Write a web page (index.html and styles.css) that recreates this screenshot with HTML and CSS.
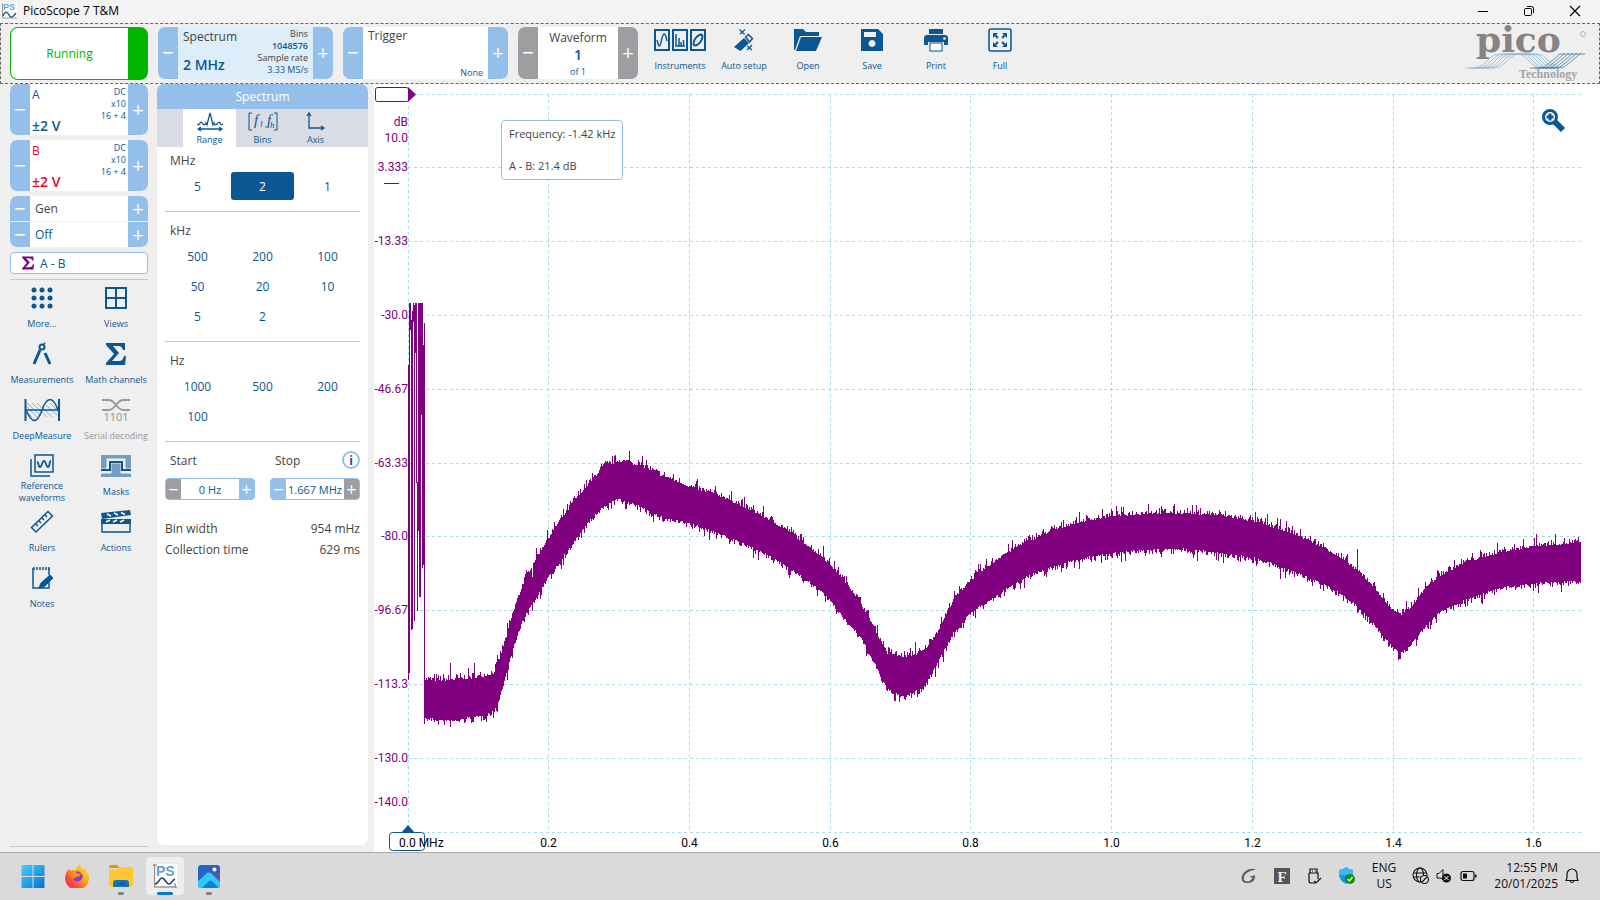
FILE: index.html
```html
<!DOCTYPE html>
<html lang="en">
<head>
    <meta charset="utf-8">
    <title>PicoScope 7 T&amp;M</title>
    <link rel="stylesheet" href="styles.css">
</head>
<body>

<header class="titlebar">
    <svg class="app-icon" width="15" height="17" viewBox="0 0 15 17"><rect width="15" height="17" fill="#fff"/><text x="1" y="8" class="ps-small">PS</text><path d="M.5 1v15H15" fill="none" stroke="#999"/><path d="M1 14c2-5 4-5 6-1s4 2 7-2" fill="none" stroke="#1c4f7c" stroke-width="1.3"/></svg>
    <span class="app-name">PicoScope 7 T&amp;M</span>
    <div class="win-buttons">
        <button aria-label="Minimize"><svg width="12" height="12"><path d="M1 6.500h10" stroke="#000"/></svg></button>
        <button aria-label="Restore"><svg width="12" height="12" fill="none" stroke="#000"><rect x="1.500" y="3.500" width="7" height="7" rx="1"/><path d="M4 1.500h4.500a2 2 0 0 1 2 2V8"/></svg></button>
        <button aria-label="Close"><svg width="12" height="12"><path d="M1 1l10 10M11 1L1 11" stroke="#000" stroke-width="1.200"/></svg></button>
    </div>
</header>

<div class="toolbar">
    <button class="run">Running</button>

    <div class="stepper spectrum">
        <button aria-label="Decrease range">&minus;</button>
        <div class="body">
            <div class="col"><span>Spectrum</span><b class="big">2 MHz</b></div>
            <div class="col right small"><span>Bins</span><b class="blue">1048576</b><span>Sample rate</span><span class="blue">3.33 MS/s</span></div>
        </div>
        <button aria-label="Increase range">+</button>
    </div>

    <div class="stepper trigger">
        <button aria-label="Previous trigger">&minus;</button>
        <div class="body"><span>Trigger</span><span class="none blue">None</span></div>
        <button aria-label="Next trigger">+</button>
    </div>

    <div class="stepper gray waveform">
        <button aria-label="Previous waveform">&minus;</button>
        <div class="body"><span>Waveform</span><b class="num">1</b><span class="small blue">of 1</span></div>
        <button aria-label="Next waveform">+</button>
    </div>

    <nav class="tools">
        <button class="tool">
            <svg width="54" height="24" viewBox="0 0 54 24" fill="none" stroke="#0b5793" stroke-width="2"><rect x="2" y="2" width="14" height="20"/><rect x="20" y="2" width="14" height="20"/><rect x="38" y="2" width="14" height="20"/><path d="M4 12c1 3 1 6 2.500 6S9 6 11 6s2 3 3 7M23 6v12h9M26 10v8M28 14v4M30.500 12v6" stroke-width="1.500"/><ellipse cx="45" cy="12" rx="3" ry="6.500" transform="rotate(35 45 12)"/></svg>
            Instruments
        </button>
        <button class="tool">
            <svg width="24" height="24" viewBox="0 0 24 24" fill="#0b5793"><path d="M12 10l5 5-8.500 8L2 19z"/><path d="M13.500 9l3-2.500 4 4-3 3.500z" fill="none" stroke="#0b5793" stroke-width="1.500"/><path d="M7.500 1.500l5 5M13 1.500L8 6M15 18l5 4M20 17l-5 5" stroke="#0b5793" stroke-width="1.300"/></svg>
            Auto setup
        </button>
        <button class="tool">
            <svg width="28" height="24" viewBox="0 0 28 24" fill="#0b5793"><path d="M0 1h9l3 3h13v4H6L1 22H0z"/><path d="M7 9h21l-6 14H2z"/></svg>
            Open
        </button>
        <button class="tool">
            <svg width="24" height="24" viewBox="0 0 24 24" fill="#0b5793" fill-rule="evenodd"><path d="M1 1h17l5 5v17H1zM4 4v5h12V4zM12 12a3.500 3.500 0 1 0 .1 0z"/></svg>
            Save
        </button>
        <button class="tool">
            <svg width="24" height="24" viewBox="0 0 24 24" fill="#0b5793"><path d="M5 1h14v5H5zM3 7h18q3 0 3 3v7h-4v-3H4v3H0v-7q0-3 3-3z"/><rect x="6" y="15" width="12" height="8" fill="#fff" stroke="#0b5793"/><circle cx="20.500" cy="10.500" r="1.300" fill="#fff"/></svg>
            Print
        </button>
        <button class="tool">
            <svg width="24" height="24" viewBox="0 0 24 24" fill="none" stroke="#0b5793" stroke-width="1.500"><rect x="1" y="1" width="22" height="22" rx="2"/><path d="M10 10L6 6M14 10l4-4M10 14l-4 4M14 14l4 4" stroke-width="2"/><path d="M5 10V5h5zM14 5h5v5zM5 14v5h5zM19 14v5h-5z" fill="#0b5793" stroke="none"/></svg>
            Full
        </button>
    </nav>

    <svg class="logo" width="130" height="58" viewBox="0 0 130 58">
        <text x="16" y="26" class="logo-pico">pico</text>
        <circle cx="123" cy="8" r="2.500" fill="none" stroke="#999" stroke-width=".7"/>
        <g id="logoWaves" fill="none" stroke-width=".8"></g>
        <text x="59" y="52" class="logo-tech">Technology</text>
    </svg>
</div>

<div class="main">
    <aside class="sidebar">
        <div class="stepper channel">
            <button aria-label="A range down">&minus;</button>
            <div class="body"><div class="col blue"><span>A</span><b class="volt">&plusmn;2 V</b></div><div class="col right small blue"><span>DC</span><span>x10</span><span>16 + 4</span></div></div>
            <button aria-label="A range up">+</button>
        </div>
        <div class="stepper channel">
            <button aria-label="B range down">&minus;</button>
            <div class="body"><div class="col red"><span>B</span><b class="volt">&plusmn;2 V</b></div><div class="col right small blue"><span>DC</span><span>x10</span><span>16 + 4</span></div></div>
            <button aria-label="B range up">+</button>
        </div>
        <div class="gen">
            <div class="stepper"><button aria-label="Previous generator">&minus;</button><div class="body">Gen</div><button aria-label="Next generator">+</button></div>
            <div class="stepper"><button aria-label="Generator off">&minus;</button><div class="body blue">Off</div><button aria-label="Generator on">+</button></div>
        </div>
        <button class="math">
            <svg width="12" height="14" viewBox="0 0 20 22"><path fill="#800080" d="M0 0h19v7h-2q-1-4-5-4H7l6 7-7 8h7q4 0 5-5h2l-1 9H0v-2l8-9-8-9z"/></svg>
            A - B
        </button>

        <div class="tool-grid">
            <button class="tool">
                <svg width="24" height="24" fill="#0b5793"><circle cx="4" cy="4" r="2.500"/><circle cx="12" cy="4" r="2.500"/><circle cx="20" cy="4" r="2.500"/><circle cx="4" cy="12" r="2.500"/><circle cx="12" cy="12" r="2.500"/><circle cx="20" cy="12" r="2.500"/><circle cx="4" cy="20" r="2.500"/><circle cx="12" cy="20" r="2.500"/><circle cx="20" cy="20" r="2.500"/></svg>
                <span>More...</span>
            </button>
            <button class="tool">
                <svg width="24" height="24" fill="none" stroke="#0b5793" stroke-width="2"><path d="M2 2h20v20H2zM12 2v20M2 12h20"/></svg>
                <span>Views</span>
            </button>
            <button class="tool">
                <svg width="24" height="24" fill="none" stroke="#0b5793"><circle cx="12" cy="5" r="2.500" stroke-width="2"/><path d="M14 2l1-1" stroke-width="2"/><path d="M10 8L4 22M15 11l5 11" stroke-width="3"/></svg>
                <span>Measurements</span>
            </button>
            <button class="tool">
                <svg width="24" height="24" viewBox="-2 -1 24 24"><path fill="#0b5793" d="M0 0h19v7h-2q-1-4-5-4H7l6 7-7 8h7q4 0 5-5h2l-1 9H0v-2l8-9-8-9z"/></svg>
                <span>Math channels</span>
            </button>
            <button class="tool">
                <svg width="36" height="24" fill="none" stroke="#0b5793"><path d="M3 5l14 13M3 9l10 10M8 5l10 9M13 5l5 5M18 14l5 5M19 10l9 9M22 7l11 10M26 5l7 7M3 14l5 5" stroke="#7b9fbe" stroke-width=".8"/><path d="M1.500 1v22M35 1v22" stroke-width="2"/><path d="M2 12h32M2 12c6 14 11 14 16 0s11-14 16 0" stroke-width="1.500"/></svg>
                <span>DeepMeasure</span>
            </button>
            <button class="tool off" disabled>
                <svg class="serial" width="30" height="24" viewBox="0 0 30 24"><path d="M1 2h7q3 0 7 5t7 5h7M1 12h7q3 0 7-5t7-5h7" fill="none" stroke="#999" stroke-width="2"/><text x="15" y="23" text-anchor="middle" class="bits">1101</text></svg>
                <span>Serial decoding</span>
            </button>
            <button class="tool">
                <svg width="24" height="24" fill="none" stroke="#0b5793" stroke-width="1.500"><path d="M5 1h18v17H5zM1 5v17h19"/><path d="M7 8c2 0 1 5 3 5s2-6 4-6 2 6 4 6 1-6 3-6" stroke-width="1.800"/></svg>
                <span>Reference waveforms</span>
            </button>
            <button class="tool">
                <svg width="30" height="24"><path d="M0 1h30v22H0z" fill="#739ec1"/><path d="M0 17h8V7h14v10h8" fill="none" stroke="#efefef" stroke-width="5"/><path d="M0 16h9V8h12v8h9" fill="none" stroke="#0b5793" stroke-width="2"/></svg>
                <span>Masks</span>
            </button>
            <button class="tool">
                <svg width="24" height="24" fill="none" stroke="#0b5793" stroke-width="1.500"><path d="M18 1.500l4.500 4.500L6 22 1.500 17.500zM15 5l2 2M12 8l2 2M9 11l2 2M6 14l2 2"/></svg>
                <span>Rulers</span>
            </button>
            <button class="tool">
                <svg width="30" height="24"><path d="M0 3l29-3 1 5-29 4z" fill="#0b5793"/><path d="M0 9h30v5H0z" fill="#0b5793"/><path d="M6 4l4 2M13 3l4 2M20 2.500l4 2M5 12l4-2M12 12l4-2M19 12l4-2" stroke="#fff" stroke-width="1.500"/><path d="M1 10v12h28V10" fill="none" stroke="#0b5793" stroke-width="1.500"/></svg>
                <span>Actions</span>
            </button>
            <button class="tool">
                <svg width="24" height="24" fill="none" stroke="#0b5793"><path d="M3 2v20h11M19 2v7" stroke-width="1.500"/><path d="M4 1v3M7 1v3M10 1v3M13 1v3M16 1v3M19 1v3" stroke-width="1.500"/><path d="M20 9l3 3-8.500 8.500L9 22l2-5z" fill="#0b5793"/><path d="M19 15v7h-5" stroke-width="1.500"/></svg>
                <span>Notes</span>
            </button>
        </div>
    </aside>

    <section class="panel">
        <h2>Spectrum</h2>
        <div class="tabs">
            <button class="active">
                <svg width="26" height="20" fill="none" stroke="#0b5793" stroke-width="1.300"><path d="M0 12q2 2 3-1 1-2 3 1 2 2 3-1l1 2 3-12 3 12 1-2q1 3 3 1 2-3 3-1 1 3 3 1M1 17h23M4 15l-3 2 3 2M22 15l3 2-3 2"/></svg>
                Range
            </button>
            <button>
                <svg width="30" height="20" fill="none" stroke="#0b5793"><path d="M4 1H1v17h3M26 1h3v17h-3"/><text x="6" y="13" class="fn">f</text><text x="12" y="15" class="fn sub">l ,</text><text x="19" y="13" class="fn">f</text><text x="22" y="16" class="fn sub">h</text></svg>
                Bins
            </button>
            <button>
                <svg width="20" height="20" fill="none" stroke="#0b5793" stroke-width="1.300"><path d="M3 2v14h14M1 4l2-3 2 3M15 14l3 2-3 2"/></svg>
                Axis
            </button>
        </div>

        <div class="group">
            <h3>MHz</h3>
            <div class="choices"><button>5</button><button class="active">2</button><button>1</button></div>
        </div>
        <div class="group">
            <h3>kHz</h3>
            <div class="choices"><button>500</button><button>200</button><button>100</button><button>50</button><button>20</button><button>10</button><button>5</button><button>2</button></div>
        </div>
        <div class="group">
            <h3>Hz</h3>
            <div class="choices"><button>1000</button><button>500</button><button>200</button><button>100</button></div>
        </div>
        <div class="limits">
            <div class="field">
                <label for="start">Start</label>
                <div class="stepper mini"><button class="dim" aria-label="Start down">&minus;</button><input id="start" type="text" value="0 Hz"><button aria-label="Start up">+</button></div>
            </div>
            <div class="field">
                <div class="label-row"><label for="stop">Stop</label><button class="info" aria-label="Information">i</button></div>
                <div class="stepper mini"><button aria-label="Stop down">&minus;</button><input id="stop" type="text" value="1.667 MHz"><button class="dim" aria-label="Stop up">+</button></div>
            </div>
        </div>
        <dl class="facts">
            <div><dt>Bin width</dt><dd>954 mHz</dd></div>
            <div><dt>Collection time</dt><dd>629 ms</dd></div>
        </dl>
    </section>

    <section class="chart" id="chart">
        <svg id="plot"></svg>
        <div class="readout"><span>Frequency: -1.42 kHz</span><span>A - B: 21.4 dB</span></div>
        <button class="zoom" aria-label="Zoom">
            <svg width="24" height="24"><path d="M12 12l9 9" stroke="#0b5793" stroke-width="6"/><circle cx="8" cy="8" r="6.500" fill="#fff" stroke="#0b5793" stroke-width="3"/><path d="M4.500 8h7M8 4.500v7" stroke="#0b5793" stroke-width="3"/></svg>
        </button>
    </section>
</div>

<footer class="taskbar">
    <div class="apps">
        <button aria-label="Start menu"><svg width="24" height="24"><defs><linearGradient id="win" x2="1" y2="1" gradientUnits="userSpaceOnUse" x1="0" y1="0" gradientTransform="scale(24)"><stop stop-color="#4fd0fb"/><stop offset="1" stop-color="#0072d0"/></linearGradient></defs><path fill="url(#win)" d="M0.500 2a1 1 0 0 1 1-1H11.500v11H.5zM12.500 1H22.500a1 1 0 0 1 1 1V12h-11zM.5 13h11v11H1.500a1 1 0 0 1-1-1zM12.500 13h11v10a1 1 0 0 1-1 1h-10z"/></svg></button>
        <button aria-label="Firefox"><svg width="24" height="24"><defs><linearGradient id="fox" x1="1" x2="0" y1="0" y2="1"><stop stop-color="#fff34a"/><stop offset=".4" stop-color="#ffa423"/><stop offset=".7" stop-color="#ff4a3c"/><stop offset="1" stop-color="#e51b82"/></linearGradient></defs><path fill="url(#fox)" d="M4 5l2 2q2-2 5-1 1-4 4-6 0 3 3 5l1-1q5 5 5 10a12 12 0 0 1-24 0Q.5 8 4 5z"/><circle cx="12.500" cy="12.500" r="5" fill="#7b3fd8"/><path d="M4 8q5-2 8 1l4 1q-1 3-5 3-3 4-6-1z" fill="#ff8a22"/></svg></button>
        <button class="open" aria-label="File Explorer"><svg width="26" height="24"><path d="M1 3q0-2 2-2h6l3 3H1z" fill="#dd9a09"/><path d="M1 5h9l2-2h11q2 0 2 2v16q0 2-2 2H3q-2 0-2-2z" fill="#ffc832"/><path d="M5 23v-4q0-3 3-3h10q3 0 3 3v4z" fill="#1272bd"/><path d="M9 20h8" stroke="#064a85"/></svg></button>
        <button class="open current" aria-label="PicoScope"><svg width="24" height="24"><path fill="#fff" d="M0 0h24v24H0z"/><text x="3" y="12" class="ps-big">PS</text><path d="M1.500 0v23H24M0 1h4M22 19v5" fill="none" stroke="#999" stroke-width="1.500"/><path d="M2 20c4 0 4-6 7-6s4 6 7 6 3-4 6-5" fill="none" stroke="#1c3f68" stroke-width="1.500"/></svg></button>
        <button class="open" aria-label="Photos"><svg width="24" height="24"><defs><linearGradient id="sky" x2="1" y2="1"><stop stop-color="#0b6fd0"/><stop offset=".6" stop-color="#4a55b5"/><stop offset="1" stop-color="#7f4bb0"/></linearGradient><clipPath id="pic"><rect x="1" y="1" width="22" height="23" rx="3"/></clipPath></defs><g clip-path="url(#pic)"><path fill="url(#sky)" d="M0 0h24v24H0z"/><path d="M-2 20L10 9q2-1 4 0l11 11v6H-2z" fill="#2ccaf4"/><path d="M5 24l7-7q2-1 3 0l7 7z" fill="#0b82dc"/></g><circle cx="17.500" cy="5.500" r="2" fill="#fff"/></svg></button>
    </div>
    <div class="tray">
        <svg width="18" height="18"><path d="M16 2.500Q10 .5 5 4.500C0 9 .5 15.500 6 16q5 .5 8-2.500l1.500-5q-4-.5-6 1.500l3 .5q-1.500 4-5.500 4-4-.5-3-5Q6 4 16 2.500z" fill="#5c5c5c"/></svg>
        <svg width="16" height="16"><path fill="#555" d="M0 0h16v16H0z"/><text x="8" y="14" text-anchor="middle" class="f-icon">F</text></svg>
        <svg width="16" height="18" fill="none" stroke="#111" stroke-width="1.200"><path d="M4 6V2h7v4M3 6h9v6M9 16H5q-2 0-2-2V6M8 14l2 2 5-5M6 4h1M9 4h1"/></svg>
        <svg width="18" height="18"><path d="M8 0q3 3 7 3v5q0 5-7 9-7-4-7-9V3q4 0 7-3z" fill="#1795e5"/><path d="M8 0q3 3 7 3v5H1V3q4 0 7-3z" fill="#3fb6f2"/><circle cx="12" cy="12" r="5" fill="#108a10"/><path d="M9.500 12l2 2 3-4" fill="none" stroke="#fff" stroke-width="1.300"/></svg>
        <span class="lang">ENG<br>US</span>
        <div class="status">
            <svg width="18" height="18" fill="none" stroke="#111" stroke-width="1.100"><circle cx="8" cy="8" r="7"/><ellipse cx="8" cy="8" rx="3.500" ry="7"/><path d="M1 6h14M1 10h14"/><circle cx="12.500" cy="12.500" r="4" fill="#dadada"/><path d="M10 15l5-5"/></svg>
            <svg width="18" height="18"><path d="M1 6.500h2L7 2.500V13L5 11H1z" fill="none" stroke="#111"/><circle cx="10.500" cy="11" r="4.500" fill="#111"/><path d="M8.500 9l4 4M12.500 9l-4 4" stroke="#fff"/></svg>
            <svg width="18" height="18"><rect x="1" y="4.500" width="13" height="9" rx="2" fill="none" stroke="#111" stroke-width="1.200"/><path d="M3 6.500h4v5H3zM15 7.500h1.500v3H15z" fill="#111"/></svg>
        </div>
        <time class="clock">12:55 PM<br>20/01/2025</time>
        <svg width="16" height="18" fill="none" stroke="#111" stroke-width="1.200"><path d="M8 2a5 5 0 0 0-5 5v4l-1 2.500h12L13 11V7a5 5 0 0 0-5-5zM6 14q2 3 4 0"/></svg>
    </div>
</footer>

<script src="chart.js"></script>
</body>
</html>
```

FILE: styles.css
```css
* { box-sizing: border-box; }

html, body { height: 100%; }
body {
    margin: 0;
    display: flex;
    flex-direction: column;
    overflow: hidden;
    background: #efefef;
    color: #444;
    font-family: "Open Sans", "Noto Sans", sans-serif;
    font-size: 12px;
}
button {
    margin: 0;
    padding: 0;
    border: 0;
    background: none;
    color: inherit;
    font: inherit;
    cursor: pointer;
}
h2, h3, dl, dd { margin: 0; font-size: 12px; font-weight: normal; }
svg { display: block; flex: none; }
b { font-weight: 600; }

.blue { color: #0b5793; }
.red { color: #f00028; }
.small { font-size: 9px; line-height: 12px; }

/* window title */
.titlebar { display: flex; align-items: center; height: 23px; padding: 0 2px 2px 2px; background: #f3f3f3; color: #000; }
.app-name { margin-left: 6px; font-size: 12px; }
.win-buttons { display: flex; margin-left: auto; }
.win-buttons button { display: flex; justify-content: center; align-items: center; width: 46px; height: 20px; }
.ps-small { font: bold 9px "Liberation Sans", sans-serif; fill: #5aa2d8; }
.ps-big { font: bold 14px "Liberation Sans", sans-serif; fill: #5aa2d8; }

/* toolbar */
.toolbar { display: flex; height: 61px; padding: 3px 9px; border: 1px dashed #666; flex: none; }
.run { width: 138px; height: 53px; border: 1px solid #00b400; border-right-width: 20px; border-radius: 8px; background: #fff; color: #00b400; margin-right: 10px; }

.stepper { display: flex; border-radius: 7px; overflow: hidden; background: #fff; }
.stepper button { width: 20px; flex: none; background: #95bfeb; color: #fff; font-size: 20px; line-height: 20px; }
.stepper.gray button, .stepper .dim { background: #9c9ea2; }
.stepper .body { flex: 1; display: flex; min-width: 0; }
.toolbar .stepper { height: 52px; margin-right: 10px; }
.spectrum { width: 175px; }
.spectrum .body { padding: 1px 5px; background: #deedfa; }
.col { display: flex; flex-direction: column; justify-content: space-between; flex: 1; }
.right { text-align: right; justify-content: flex-start; }
.big { color: #0b5793; font-size: 14px; line-height: 26px; }
.trigger { width: 165px; }
.trigger .body { flex-direction: column; justify-content: space-between; padding: 0 5px; }
.none { align-self: flex-end; font-size: 9px; line-height: 13px; }
.waveform { width: 120px; }
.waveform .body { flex-direction: column; align-items: center; padding-top: 2px; line-height: 17px; }
.waveform .small { line-height: 17px; }
.num { color: #0b5793; font-size: 14px; }

.tools { display: flex; }
.tool { display: flex; flex-direction: column; align-items: center; gap: 8px; width: 64px; color: #0b5793; font-size: 9px; line-height: 12px; white-space: nowrap; }
.tools .tool { padding-top: 1px; }
.logo { margin-left: auto; margin-top: -1px; overflow: visible; }
.logo-pico { font: bold 36px "DejaVu Serif", serif; fill: #858383; }
.logo-tech { font: bold 12px "Liberation Serif", serif; fill: #a3a3a3; }

/* body */
.main { flex: 1; display: flex; min-height: 0; }
.sidebar { display: flex; flex-direction: column; gap: 5px; width: 157px; flex: none; padding: 0 9px 5px 10px; }
.channel { height: 51px; flex: none; }
.channel .body { padding: 2px; }
.channel .volt { font-size: 14px; line-height: 15px; }
.gen { display: flex; flex-direction: column; gap: 1px; border-radius: 7px; overflow: hidden; flex: none; }
.gen .stepper { height: 25px; border-radius: 0; }
.gen .body { align-items: center; padding-left: 5px; }
.math { display: flex; align-items: center; gap: 6px; height: 22px; padding-left: 11px; border: 1px solid #95bfeb; border-radius: 4px; background: #fff; color: #0b5793; flex: none; }
.sidebar > div, .math { width: 138px; }
.tool-grid { flex: 1; display: grid; grid-template-columns: 64px 64px; column-gap: 10px; grid-auto-rows: 56px; border-top: 1px solid #c8c8c8; border-bottom: 1px solid #c8c8c8; }
.tool-grid .tool { width: auto; padding-top: 6px; gap: 2px; }
.tool-grid .tool span { display: flex; align-items: center; justify-content: center; height: 24px; white-space: normal; }
.tool-grid .tool:nth-child(even) span { white-space: nowrap; }
.tool.off { color: #999; }
.serial { overflow: visible; }
.bits { font: 11px "Noto Sans", sans-serif; fill: #999; }

/* spectrum panel */
.panel { width: 211px; flex: none; margin: 0 6px 7px 0; background: #fff; border-radius: 7px; overflow: hidden; }
.panel h2 { height: 25px; line-height: 25px; text-align: center; background: #95bfeb; color: #fff; }
.tabs { display: flex; padding-left: 26px; background: #d9dce4; }
.tabs button { display: flex; flex-direction: column; align-items: center; width: 53px; height: 38px; padding-top: 3px; color: #0b5793; font-size: 9px; line-height: 15px; }
.tabs .active { background: #fff; }
.fn { font: italic 15px "Liberation Serif", serif; fill: #0b5793; stroke: none; }
.sub { font-size: 9px; }
.group { margin: 0 8px; padding: 8px 0 10px; border-bottom: 1px solid #c8c8c8; }
.tabs + .group { padding-top: 3px; }
.group h3, .field label { height: 21px; line-height: 21px; padding-left: 5px; }
.choices { display: grid; grid-template-columns: repeat(3, 1fr); }
.choices button { height: 28px; margin: 1px; border-radius: 3px; color: #0b5793; }
.choices .active { background: #0b5793; color: #fff; }
.limits { display: flex; justify-content: space-between; padding: 8px 8px 0; }
.field { display: flex; flex-direction: column; gap: 7px; width: 90px; }
.label-row { display: flex; justify-content: space-between; height: 21px; }
.info { width: 18px; height: 18px; margin-top: 1px; border: 2px solid #95bfeb; border-radius: 50%; color: #0b5793; font-weight: bold; line-height: 13px; }
.mini { height: 22px; border: 1px solid #95bfeb; border-radius: 4px; background: #95bfeb; }
.mini button { width: 15px; font-size: 18px; line-height: 20px; }
.mini input { flex: 1; min-width: 0; padding: 0; border: 0; background: #fff; color: #0b5793; font: inherit; font-size: 11px; text-align: center; }
.facts { margin: 18px 8px 0; }
.facts div { display: flex; justify-content: space-between; line-height: 21px; }

/* chart */
.chart { position: relative; flex: 1; min-width: 0; background: #fff; }
#plot { width: 100%; height: 100%; }
#plot text { font: 12px Roboto, sans-serif; fill: #000; }
#plot .db { fill: #800080; text-anchor: end; }
#plot .mhz { text-anchor: middle; }
.grid { stroke: #add8e6; stroke-dasharray: 3 3; shape-rendering: crispEdges; }
.readout { position: absolute; left: 127px; top: 36px; display: flex; flex-direction: column; gap: 16px; padding: 5px 7px; border: 1px solid #95bfeb; border-radius: 4px; background: #fff; font-size: 11px; line-height: 16px; white-space: nowrap; }
.zoom { position: absolute; right: 34px; top: 25px; }

/* taskbar */
.taskbar { display: flex; justify-content: space-between; align-items: center; height: 48px; padding: 0 20px 2px 11px; border-top: 1px solid #aaa; background: #dadada; color: #111; flex: none; }
.apps { display: flex; }
.apps button { position: relative; display: flex; align-items: center; justify-content: center; width: 38px; height: 38px; margin: 0 3px; border-radius: 4px; }
.apps .current { background: #eee; }
.apps .open::after { content: ""; position: absolute; bottom: 0; left: 50%; width: 6px; height: 3px; margin-left: -3px; border-radius: 2px; background: #808080; }
.apps .current::after { width: 16px; margin-left: -8px; background: #0078d4; }
.tray { display: flex; align-items: center; gap: 16px; line-height: 16px; }
.lang { text-align: center; }
.status { display: flex; gap: 6px; }
.clock { text-align: right; }
.tray .clock + svg { margin-left: -10px; }
.f-icon { font: bold 15px "Liberation Serif", serif; fill: #eee; }
```

FILE: chart.js
```js
// plot margins inside the chart box
var LEFT = 34, TOP = 10, RIGHT = 19, BOTTOM = 20;
var MAX_MHZ = 1.667;

// horizontal grid, from top to bottom; evenly spaced
var dbLines = ["", "3.333", "-13.33", "-30.0", "-46.67", "-63.33", "-80.0", "-96.67", "-113.3", "-130.0", ""];
var mhzLines = [0.2, 0.4, 0.6, 0.8, 1.0, 1.2, 1.4, 1.6];

// noise band: position, upper edge, lower edge, on a 1173 x 738 field
var band = [
    [16,586,624],[42,586,627],[72,583,622],[85,579,618],[89,571,611],[97,546,583],[105,518,554],
    [115,489,524],[125,469,509],[140,444,483],[165,408,449],[182,388,426],[195,373,413],
    [210,367,405],[232,371,413],[252,381,423],[282,393,430],[315,403,441],[349,419,456],
    [382,438,474],[415,464,499],[432,481,519],[452,508,543],[467,536,571],[479,559,596],
    [495,563,603],[515,558,594],[529,538,569],[545,506,539],[562,486,519],[592,463,499],
    [617,448,483],[645,436,473],[667,429,466],[703,422,459],[742,419,456],[775,419,455],
    [810,421,459],[846,427,464],[882,438,476],[917,454,491],[942,471,506],[962,489,526],
    [982,514,551],[992,521,559],[1000,516,554],[1017,494,533],[1032,481,518],[1057,468,506],
    [1092,458,494],[1132,451,489],[1173,449,487]
];
// low-frequency bars, one per column: top, bottom
var bars = [[271,586],[209,579],[209,236],[226,536],[217,535],[209,228],[211,527],[209,259],[209,389],
    [388,517],[209,437],[209,503],[209,503],[209,321],[209,474],[251,471],[229,623]];
var peaks = { 42: 569, 66: 569, 124: 483, 176: 390, 221: 357, 238: 366, 415: 452, 507: 548, 740: 410, 859: 420, 949: 455, 1128: 440 };
var dips = { 381: 484, 491: 608, 872: 485, 1008: 552 };

var seed = 7;
function rnd() {
    seed = (seed * 16807) % 2147483647;
    return seed / 2147483647;
}
function noise() {
    return Math.min(11, -Math.log(1 - rnd()) * 2.6);
}

function trace(sx, sy) {
    var d = "", i, x, k = 0;
    seed = 7;
    function col(x, a, b) {
        d += "M" + (LEFT + x * sx) + " " + (TOP + a * sy) + "h" + sx + "V" + (TOP + b * sy) + "h" + (-sx) + "z";
    }
    for (i = 0; i < bars.length; i++) col(i, bars[i][0], bars[i][1]);
    for (x = 16; x < 1173; x++) {
        while (x > band[k + 1][0]) k++;
        var p = band[k], q = band[k + 1], t = (x - p[0]) / (q[0] - p[0]);
        var a = p[1] + (q[1] - p[1]) * t + 1 - noise();
        var b = p[2] + (q[2] - p[2]) * t - 1 + noise();
        if (peaks[x]) a = peaks[x];
        if (dips[x]) b = dips[x];
        col(x, Math.round(a), Math.round(b));
    }
    return '<path fill="#800080" shape-rendering="crispEdges" d="' + d + '"/>';
}

function draw() {
    var box = document.getElementById("chart");
    var w = box.clientWidth - LEFT - RIGHT, h = box.clientHeight - TOP - BOTTOM;
    var out = "", i, x, y;
    for (i = 0; i < dbLines.length; i++) {
        y = Math.floor(TOP + i * h / 10) + 0.5;
        out += '<path class="grid" d="M' + LEFT + ' ' + y + 'h' + w + '"/>';
        if (dbLines[i]) out += '<text class="db" x="' + LEFT + '" y="' + (y + 3.5) + '">' + dbLines[i] + '</text>';
    }
    out += '<path class="grid" d="M' + (LEFT + 0.5) + ' ' + TOP + 'v' + h + '"/>';
    for (i = 0; i < mhzLines.length; i++) {
        x = Math.floor(LEFT + w * mhzLines[i] / MAX_MHZ) + 0.5;
        out += '<path class="grid" d="M' + x + ' ' + TOP + 'v' + h + '"/>';
        out += '<text class="mhz" x="' + x + '" y="' + (TOP + h + 15) + '">' + mhzLines[i].toFixed(1) + '</text>';
    }
    out += '<text class="db" x="' + LEFT + '" y="42">dB</text>';
    out += '<text class="db" x="' + LEFT + '" y="58">10.0</text>';
    out += '<text class="db" x="' + LEFT + '" y="' + (TOP + h - 26) + '">-140.0</text>';
    out += '<path d="M10 99.5h15" stroke="#800080"/>';
    out += trace(w / 1173, h / 738);

    // axis handles
    out += '<rect x="1.5" y="3.5" width="33" height="14" rx="2" fill="#fff" stroke="#800080"/><path d="M34 3l8 7.5-8 7.5z" fill="#800080"/>';
    y = TOP + h;
    out += '<path d="M27 ' + (y + 1) + 'l7-8 7 8z" fill="#0b5793"/>';
    out += '<rect x="15.5" y="' + (y + 0.5) + '" width="35" height="18" rx="3" fill="#fff" stroke="#0b5793"/>';
    out += '<text x="25" y="' + (y + 15) + '">0.0 MHz</text>';
    document.getElementById("plot").innerHTML = out;
}

// crossing strands under the logo
function logo() {
    var s = "";
    for (var i = 0; i < 6; i++) {
        var o = i * 4;
        s += '<path stroke="#8db9dd" d="M' + (6 + o) + ' 42h8q6 0 11-5l5-5q4-4 10-4h17q6 0 10 5l5 5q5 4 11 4"/>';
        s += '<path stroke="#4a7d9c" d="M' + (70 + o) + ' 42h8q6 0 10-4l12-10h5"/>';
    }
    document.getElementById("logoWaves").innerHTML = s;
}

logo();
draw();
window.onresize = draw;
```
